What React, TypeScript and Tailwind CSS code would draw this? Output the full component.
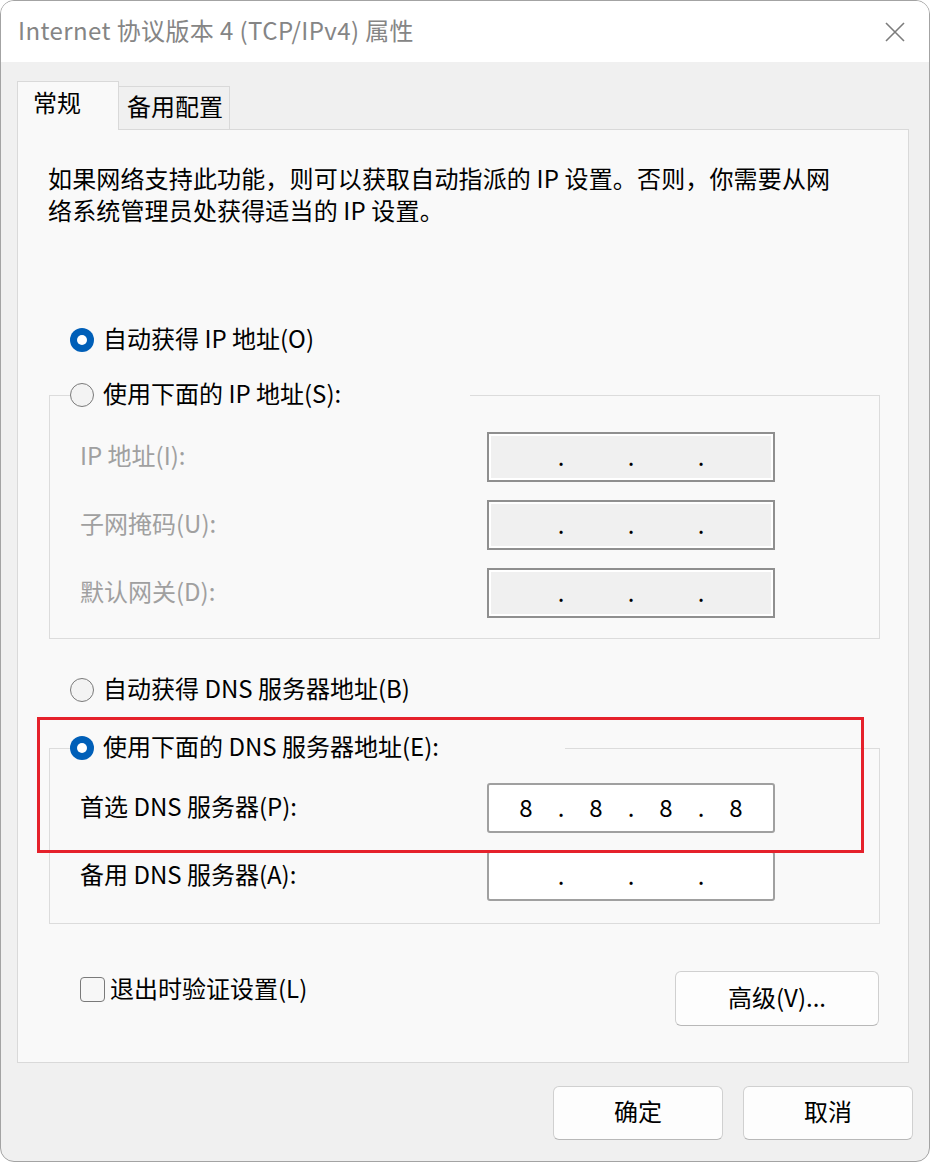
import React from "react";

type RadioProps = { checked?: boolean; label: string };

function Radio({ checked, label }: RadioProps) {
  return (
    <div className="flex items-center h-[36px] gap-[9px] bg-[#f9f9f9] pr-[2px]">
      {checked ? (
        <span className="w-[24px] h-[24px] rounded-full bg-[#005fb8] flex items-center justify-center shrink-0">
          <span className="w-[10px] h-[10px] rounded-full bg-white" />
        </span>
      ) : (
        <span className="w-[24px] h-[24px] rounded-full border border-[#7a7a7a] bg-[#f3f3f3] shrink-0" />
      )}
      <span className="pb-[4px] text-[24px] leading-[32px] text-black whitespace-nowrap">{label}</span>
    </div>
  );
}

function IpBox({ disabled, value }: { disabled?: boolean; value?: string[] }) {
  const parts = value ?? ["", "", "", ""];
  return (
    <div
      className={
        disabled
          ? "w-[288px] h-[50px] border-2 border-[#8f8f8f] bg-[#f0f0f0] shadow-[inset_0_0_0_2px_#ffffff] flex items-center pl-[4px] pb-[3px]"
          : "w-[288px] h-[50px] border-2 border-[#a0a0a0] rounded-[3px] bg-white flex items-center pl-[4px] pb-[3px]"
      }
    >
      {parts.map((p, i) => (
        <React.Fragment key={i}>
          <span className="w-[66px] text-center text-[24px] leading-[32px] text-black">{p}</span>
          {i < 3 && (
            <span className="w-[4px] flex justify-center text-[24px] leading-[32px] text-black">.</span>
          )}
        </React.Fragment>
      ))}
    </div>
  );
}

function Row({ label, disabled, value }: { label: string; disabled?: boolean; value?: string[] }) {
  return (
    <div className="flex items-center h-[50px]">
      <span
        className={
          "w-[407px] pb-[4px] text-[24px] leading-[32px] whitespace-nowrap " +
          (disabled ? "text-[#a0a0a0]" : "text-black")
        }
      >
        {label}
      </span>
      <IpBox disabled={disabled} value={value} />
    </div>
  );
}

function Button({ label, className }: { label: string; className: string }) {
  return (
    <button
      className={
        "rounded-[6px] border border-[#d0d0d0] border-b-[#b8b8b8] bg-[#fdfdfd] pb-[4px] text-[24px] leading-[32px] text-black flex items-center justify-center " +
        className
      }
    >
      {label}
    </button>
  );
}

export default function App() {
  return (
    <div className="w-[930px] h-[1162px] bg-white font-['Noto_Sans_CJK_SC',sans-serif]">
      <div className="w-full h-full rounded-[14px] border border-[#a3a3a3] overflow-hidden flex flex-col bg-[#f0f0f0]">
        {/* title bar */}
        <div className="h-[61px] bg-white flex items-center justify-between pl-[17px] pr-[24px] shrink-0">
          <span className="pb-[4px] text-[24px] leading-[32px] text-[#858585] tracking-[0.4px]">
            Internet 协议版本 4 (TCP/IPv4) 属性
          </span>
          <svg width="20" height="20" viewBox="0 0 20 20">
            <path d="M1 1 L19 19 M19 1 L1 19" stroke="#7c7c7c" strokeWidth="1.6" fill="none" />
          </svg>
        </div>

        <div className="flex-1 pl-[16px] pt-[19px]">
          {/* tabs */}
          <div className="flex items-end h-[48px]">
            <div className="relative z-10 -mb-[1px] w-[102px] h-[49px] border border-b-0 border-[#d9d9d9] bg-[#f9f9f9] pl-[15px] pt-[4px] text-[24px] leading-[32px] text-black">
              常规
            </div>
            <div className="w-[111px] h-[43px] border-t border-r border-[#d9d9d9] bg-[#f0f0f0] pl-[8px] pt-[3px] text-[24px] leading-[32px] text-black">
              备用配置
            </div>
          </div>

          {/* panel */}
          <div className="relative w-[892px] h-[934px] border border-[#d9d9d9] bg-[#f9f9f9] pl-[30px]">
            <p className="pt-[32px] pb-[3px] text-[24px] leading-[32px] text-black tracking-[0.15px]">
              如果网络支持此功能，则可以获取自动指派的 IP 设置。否则，你需要从网
              <br />
              络系统管理员处获得适当的 IP 设置。
            </p>

            <div className="mt-[93px] ml-[22px] w-fit">
              <Radio checked label="自动获得 IP 地址(O)" />
            </div>

            <fieldset className="mt-[19px] ml-[1px] w-[831px] border border-[#dcdcdc] pl-[30px] pt-[19px] pb-[20px]">
              <legend className="ml-[-10px] w-[400px]">
                <div className="w-fit">
                  <Radio label="使用下面的 IP 地址(S):" />
                </div>
              </legend>
              <div className="flex flex-col gap-[18px]">
                <Row label="IP 地址(I):" disabled />
                <Row label="子网掩码(U):" disabled />
                <Row label="默认网关(D):" disabled />
              </div>
            </fieldset>

            <div className="mt-[33px] ml-[22px] w-fit">
              <Radio label="自动获得 DNS 服务器地址(B)" />
            </div>

            <fieldset className="mt-[22px] ml-[1px] w-[831px] border border-[#dcdcdc] pl-[30px] pt-[17px] pb-[22px]">
              <legend className="ml-[-10px] w-[495px]">
                <div className="w-fit">
                  <Radio checked label="使用下面的 DNS 服务器地址(E):" />
                </div>
              </legend>
              <div className="flex flex-col gap-[18px]">
                <Row label="首选 DNS 服务器(P):" value={["8", "8", "8", "8"]} />
                <Row label="备用 DNS 服务器(A):" />
              </div>
            </fieldset>

            <div className="mt-[47px] flex items-start justify-between pr-[29px]">
              <div className="ml-[32px] flex items-center h-[36px] gap-[5px]">
                <span className="w-[25px] h-[25px] rounded-[4px] border border-[#7a7a7a] bg-[#f7f7f7]" />
                <span className="pb-[3px] text-[24px] leading-[32px] text-black">退出时验证设置(L)</span>
              </div>
              <Button label="高级(V)..." className="w-[204px] h-[55px]" />
            </div>

            {/* red highlight */}
            <div className="absolute left-[19px] top-[587px] w-[827px] h-[136px] border-[3px] border-[#e5212b]" />
          </div>

          {/* bottom buttons */}
          <div className="mt-[23px] w-[896px] flex justify-end gap-[20px]">
            <Button label="确定" className="w-[170px] h-[54px]" />
            <Button label="取消" className="w-[170px] h-[54px]" />
          </div>
        </div>
      </div>
    </div>
  );
}
